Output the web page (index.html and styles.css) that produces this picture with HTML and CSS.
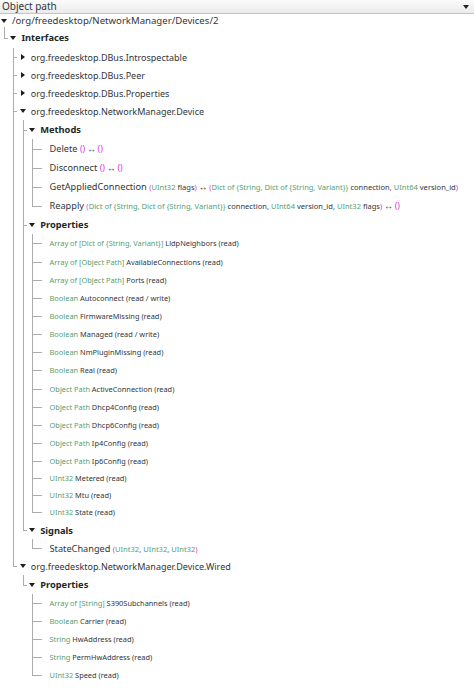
FILE: index.html
```html
<!DOCTYPE html>
<html>
<head>
<meta charset="utf-8">
<link rel="stylesheet" href="styles.css">
</head>
<body>
<div class="hdr"><span>Object path</span><span class="hdr-arrow"></span></div>
<div class="tree">
<ul class="top">
 <li>
  <div class="row h13"><span class="tw open"></span><span class="lbl rt">/org/freedesktop/NetworkManager/Devices/2</span></div>
  <ul>
   <li>
    <div class="row h21"><span class="tw open"></span><span class="lbl sec">Interfaces</span></div>
    <ul>
     <li><div class="row"><span class="tw closed"></span><span class="lbl n">org.freedesktop.DBus.Introspectable</span></div></li>
     <li><div class="row"><span class="tw closed"></span><span class="lbl n">org.freedesktop.DBus.Peer</span></div></li>
     <li><div class="row"><span class="tw closed"></span><span class="lbl n">org.freedesktop.DBus.Properties</span></div></li>
     <li>
      <div class="row"><span class="tw open"></span><span class="lbl n">org.freedesktop.NetworkManager.Device</span></div>
      <ul>
       <li>
        <div class="row h19"><span class="tw open"></span><span class="lbl sec">Methods</span></div>
        <ul>
         <li><div class="row leaf h19"><span class="tw"></span><span class="lbl m">Delete <span class="sig"><span class="p e">()</span> <span class="ar">↔</span> <span class="p e">()</span></span></span></div></li>
         <li><div class="row leaf h19"><span class="tw"></span><span class="lbl m">Disconnect <span class="sig"><span class="p e">()</span> <span class="ar">↔</span> <span class="p e">()</span></span></span></div></li>
         <li><div class="row leaf h19"><span class="tw"></span><span class="lbl m">GetAppliedConnection <span class="sig"><span class="p">(</span><span class="ty">UInt32</span> flags<span class="p">)</span> <span class="ar">↔</span> <span class="p">(</span><span class="ty">Dict of {String, Dict of {String, Variant}}</span> connection, <span class="ty">UInt64</span> version_id<span class="p">)</span></span></span></div></li>
         <li><div class="row leaf h19"><span class="tw"></span><span class="lbl m">Reapply <span class="sig"><span class="p">(</span><span class="ty">Dict of {String, Dict of {String, Variant}}</span> connection, <span class="ty">UInt64</span> version_id, <span class="ty">UInt32</span> flags<span class="p">)</span> <span class="ar">↔</span> <span class="p e">()</span></span></span></div></li>
        </ul>
       </li>
       <li>
        <div class="row h19"><span class="tw open"></span><span class="lbl sec">Properties</span></div>
        <ul>
         <li><div class="row leaf"><span class="tw"></span><span class="lbl pr"><span class="ty">Array of [Dict of {String, Variant}]</span> LldpNeighbors (read)</span></div></li>
         <li><div class="row leaf h19"><span class="tw"></span><span class="lbl pr"><span class="ty">Array of [Object Path]</span> AvailableConnections (read)</span></div></li>
         <li><div class="row leaf"><span class="tw"></span><span class="lbl pr"><span class="ty">Array of [Object Path]</span> Ports (read)</span></div></li>
         <li><div class="row leaf"><span class="tw"></span><span class="lbl pr"><span class="ty">Boolean</span> Autoconnect (read / write)</span></div></li>
         <li><div class="row leaf"><span class="tw"></span><span class="lbl pr"><span class="ty">Boolean</span> FirmwareMissing (read)</span></div></li>
         <li><div class="row leaf"><span class="tw"></span><span class="lbl pr"><span class="ty">Boolean</span> Managed (read / write)</span></div></li>
         <li><div class="row leaf"><span class="tw"></span><span class="lbl pr"><span class="ty">Boolean</span> NmPluginMissing (read)</span></div></li>
         <li><div class="row leaf"><span class="tw"></span><span class="lbl pr"><span class="ty">Boolean</span> Real (read)</span></div></li>
         <li><div class="row leaf h19"><span class="tw"></span><span class="lbl pr"><span class="ty">Object Path</span> ActiveConnection (read)</span></div></li>
         <li><div class="row leaf"><span class="tw"></span><span class="lbl pr"><span class="ty">Object Path</span> Dhcp4Config (read)</span></div></li>
         <li><div class="row leaf"><span class="tw"></span><span class="lbl pr"><span class="ty">Object Path</span> Dhcp6Config (read)</span></div></li>
         <li><div class="row leaf"><span class="tw"></span><span class="lbl pr"><span class="ty">Object Path</span> Ip4Config (read)</span></div></li>
         <li><div class="row leaf"><span class="tw"></span><span class="lbl pr"><span class="ty">Object Path</span> Ip6Config (read)</span></div></li>
         <li><div class="row leaf h16"><span class="tw"></span><span class="lbl pr"><span class="ty">UInt32</span> Metered (read)</span></div></li>
         <li><div class="row leaf h17"><span class="tw"></span><span class="lbl pr"><span class="ty">UInt32</span> Mtu (read)</span></div></li>
         <li><div class="row leaf"><span class="tw"></span><span class="lbl pr"><span class="ty">UInt32</span> State (read)</span></div></li>
        </ul>
       </li>
       <li>
        <div class="row"><span class="tw open"></span><span class="lbl sec">Signals</span></div>
        <ul>
         <li><div class="row leaf"><span class="tw"></span><span class="lbl m">StateChanged <span class="sig"><span class="p">(</span><span class="ty">UInt32</span>, <span class="ty">UInt32</span>, <span class="ty">UInt32</span><span class="p">)</span></span></span></div></li>
        </ul>
       </li>
      </ul>
     </li>
     <li>
      <div class="row"><span class="tw open"></span><span class="lbl n">org.freedesktop.NetworkManager.Device.Wired</span></div>
      <ul>
       <li>
        <div class="row h19"><span class="tw open"></span><span class="lbl sec">Properties</span></div>
        <ul>
         <li><div class="row leaf"><span class="tw"></span><span class="lbl pr"><span class="ty">Array of [String]</span> S390Subchannels (read)</span></div></li>
         <li><div class="row leaf"><span class="tw"></span><span class="lbl pr"><span class="ty">Boolean</span> Carrier (read)</span></div></li>
         <li><div class="row leaf"><span class="tw"></span><span class="lbl pr"><span class="ty">String</span> HwAddress (read)</span></div></li>
         <li><div class="row leaf"><span class="tw"></span><span class="lbl pr"><span class="ty">String</span> PermHwAddress (read)</span></div></li>
         <li><div class="row leaf"><span class="tw"></span><span class="lbl pr"><span class="ty">UInt32</span> Speed (read)</span></div></li>
        </ul>
       </li>
      </ul>
     </li>
    </ul>
   </li>
  </ul>
 </li>
</ul>
</div>
</body>
</html>
```
FILE: styles.css
```css
html, body {
  margin: 0;
  padding: 0;
  background: #ffffff;
}
body {
  width: 474px;
  height: 688px;
  overflow: hidden;
  font-family: "Noto Sans", "Open Sans", sans-serif;
  color: #31363b;
}
.hdr {
  height: 13px;
  border-bottom: 1px solid #c4c4c4;
  background: linear-gradient(#fbfbfb, #ebebeb);
  display: flex;
  align-items: center;
  justify-content: space-between;
  padding: 0 5px 0 2px;
  font-size: 10px;
  line-height: 13px;
  color: #31363b;
}
.hdr-arrow {
  width: 0;
  height: 0;
  border-left: 3px solid transparent;
  border-right: 3px solid transparent;
  border-top: 4px solid #222;
  margin-top: 1px;
}
.tree ul {
  list-style: none;
  margin: 0;
  padding: 0 0 0 9.4px;
}
.tree ul.top {
  padding-left: 0;
}
.tree li {
  position: relative;
}
.tree ul ul > li:not(:last-child)::before {
  content: "";
  position: absolute;
  left: -5.4px;
  top: 0;
  bottom: 0;
  border-left: 1px solid #ababab;
}
.tree ul ul > li:last-child > .row::before {
  content: "";
  position: absolute;
  left: -5.4px;
  top: 0;
  height: 50%;
  border-left: 1px solid #ababab;
}
.tree ul ul > li > .row::after {
  content: "";
  position: absolute;
  left: -5.4px;
  top: 50%;
  width: 4px;
  border-top: 1px solid #ababab;
}
.tree ul ul > li > .row.leaf::after {
  width: 10px;
}
.row {
  position: relative;
  display: flex;
  align-items: center;
  height: 18px;
  white-space: nowrap;
}
.h13 { height: 13px; }
.h16 { height: 16px; }
.h17 { height: 17px; }
.h19 { height: 19px; }
.h21 { height: 21px; }
.tw {
  width: 8px;
  flex: none;
  display: flex;
  justify-content: center;
  align-items: center;
}
.tw.open::before {
  content: "";
  border-left: 3px solid transparent;
  border-right: 3px solid transparent;
  border-top: 4px solid #1e1e1e;
}
.tw.closed::before {
  content: "";
  border-top: 3px solid transparent;
  border-bottom: 3px solid transparent;
  border-left: 4px solid #1e1e1e;
}
.lbl {
  margin-left: 4px;
}
.rt {
  font-size: 9.6px;
}
.n {
  font-size: 9px;
}
.m {
  font-size: 9.2px;
}
.sec {
  font-size: 9.3px;
  font-weight: bold;
  color: #232627;
}
.pr {
  font-size: 7.4px;
}
.sig {
  font-size: 7.55px;
}
.ty {
  color: #55a072;
}
.p {
  color: #d93ad9;
}
.p.e {
  font-size: 8.8px;
}
.ar {
  font-size: 8.5px;
}
```
